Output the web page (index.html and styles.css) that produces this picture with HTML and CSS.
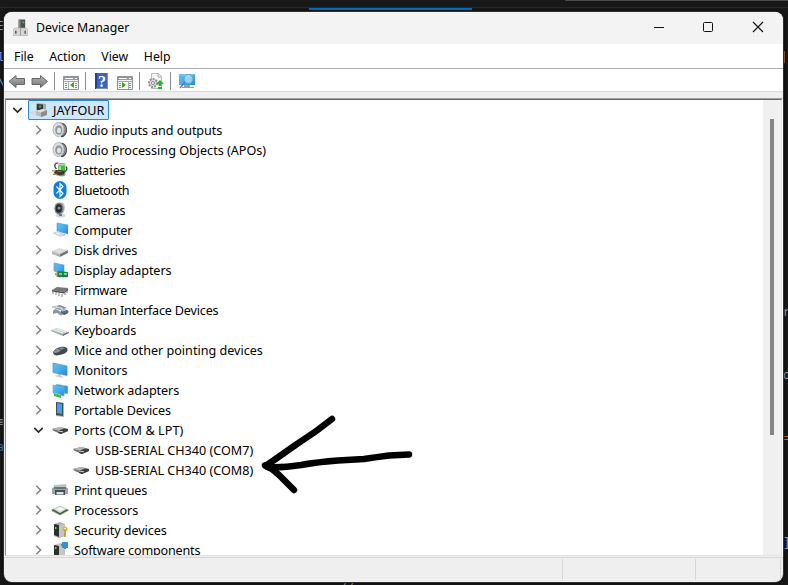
FILE: index.html
```
<!DOCTYPE html>
<html lang="en">
<head>
<meta charset="utf-8">
<title>Device Manager</title>
<link rel="stylesheet" href="styles.css">
</head>
<body>
<svg class="defs" width="0" height="0" aria-hidden="true">
<defs>
<linearGradient id="blue" x1="0" y1="0" x2="1" y2="1"><stop offset="0" stop-color="#5bc4fa"/><stop offset=".5" stop-color="#43aef5"/><stop offset="1" stop-color="#2188dc"/></linearGradient>
<linearGradient id="arrowfill" x1="0" y1="0" x2="0" y2="1"><stop offset="0" stop-color="#b5b5b5"/><stop offset="1" stop-color="#777"/></linearGradient>
<symbol id="closed" viewBox="0 0 16 16"><path d="M6.300 3.800 10.500 8l-4.200 4.200" fill="none" stroke="#858585" stroke-width="1.600"/></symbol>
<symbol id="open" viewBox="0 0 16 16"><path d="M4.300 5.800 8.500 10l4.200-4.200" fill="none" stroke="#2b2b2b" stroke-width="1.700"/></symbol>
<symbol id="pc" viewBox="0 0 16 16"><path d="M5 2 7 1l8 1v9H5z" fill="#a5a5a5"/><path d="m6 2 6 .5V9H6z" fill="#343936"/><path d="M8 3.500h2v2H8z" fill="#35b54a"/><path d="m0 10 5-2 4 1v4l-4 1-5-2z" fill="#d8d8d8"/><path d="m5 9 7-2 4 1v5l-6 2-5-2z" fill="#bcbcbc"/><path d="m5 9 5 1.500L16 8l-4-1z" fill="#dedede"/><path d="m10 10.500 6-2.500v5l-6 2z" fill="#8c8c8c"/></symbol>
<symbol id="speaker" viewBox="0 0 16 16"><path d="M7 1c5-1 8 2 8 7 0 4-3 8-6 7z" fill="#454545"/><path d="M11 2c5 3 4 10-1 12z" fill="#868686"/><ellipse cx="6.500" cy="7.500" rx="5.500" ry="7" fill="#dde1e3" stroke="#adb1b4"/><ellipse cx="6.800" cy="8" rx="3.600" ry="4.800" fill="#929a9e"/><ellipse cx="7" cy="8.500" rx="2" ry="2.800" fill="#e1e5e6"/></symbol>
<symbol id="battery" viewBox="0 0 18 18"><rect x="7" y="1" width="8" height="15" rx="2" fill="#42bd3e"/><path d="M7 3h8M7 14h8" stroke="#c4ccc4" stroke-width="2"/><path d="M9 5v6" stroke="#a9ed91" stroke-width="2"/><path d="M5 8C1 3 4 1 7 1M10 11c5 1 8-2 6-6" fill="none" stroke="#454b43" stroke-width="1.500"/><path d="M4 9h6l4 1v4l-4 1H5l-3-3z" fill="#403b31"/><path d="M0 10h4M1 14h5" stroke="#ac8a4a" stroke-width="1.400"/><path d="M6 10.500h5" stroke="#867b66"/></symbol>
<symbol id="bt" viewBox="0 0 16 18"><rect x="1.500" y="0" width="13" height="18" rx="6.500" fill="#0780ee"/><path d="m4.500 5.500 6.500 7-3 3v-13l3 3-6.500 7" fill="none" stroke="#fff" stroke-width="1.200"/></symbol>
<symbol id="camera" viewBox="0 0 16 16"><ellipse cx="8.500" cy="13.500" rx="5" ry="2" fill="#d7d7d7"/><path d="M9 0c5 0 5 10 1 12z" fill="#c6c6c6"/><ellipse cx="7" cy="6.500" rx="4.600" ry="6" fill="#777c7f"/><ellipse cx="6.800" cy="6.500" rx="3.100" ry="4.300" fill="#24292d"/><circle cx="7" cy="6" r="1.600" fill="#87919a"/><path d="M7 12h3v2H7z" fill="#777"/></symbol>
<symbol id="computer" viewBox="0 0 16 16"><path d="m5 1 11 2v9L5 9z" fill="url(#blue)" stroke="#5b91b5" stroke-width=".6"/><path d="m0 11 5-2 8 3-5 3z" fill="#d9e0e4"/><path d="m2 11 3-1 5 2-3 1z" fill="#f9f9f9" stroke="#adb9c0" stroke-width=".5"/><path d="m8 15 5-3v1l-5 2z" fill="#89959d"/></symbol>
<symbol id="disk" viewBox="0 0 16 16"><path d="m0 9 7-3 9 2-8 4z" fill="#dedede"/><path d="m0 9 8 3v3l-8-3z" fill="#b8b8b8"/><path d="m8 12 8-4v3l-8 4z" fill="#777"/><path d="m5 13 2 .8" stroke="#69c66b"/></symbol>
<symbol id="display" viewBox="0 0 16 16"><path d="m2 1 10 2v9L2 9z" fill="url(#blue)" stroke="#788c98" stroke-width=".6"/><path d="m3 11 3 1v2l-3-1z" fill="#999"/><path d="m5 9 11 1v5H5z" fill="#138554"/><path d="M7 11h3v2H7zm5 0h3v2h-3z" fill="#91ca71"/><path d="M5 8v7m3 0v1m3-1v1m3-1v1" stroke="#c8a43b"/></symbol>
<symbol id="chip" viewBox="0 0 16 16"><path d="m0 8 5-3 11 1-4 4z" fill="#777"/><path d="m0 8 12 2v1.500L0 9.500z" fill="#4b4b4b"/><path d="m12 10 4-4v2.500l-4 3z" fill="#555"/><path d="M1 9v3m3-2v3m3-2v3m3-2v3m3-4v2m2-4v2" stroke="#828282"/></symbol>
<symbol id="hid" viewBox="0 0 18 16"><path d="m0 5 9-2 7 3-7 2z" fill="#7f929e"/><path d="m1 5 10 1m-7-2 8 3" stroke="#d4dce0"/><path d="M2 9c1-2 3-2 5-1l3 2c2 3 1 4-1 3L6 11l-4 1z" fill="#8c989f"/><path d="M10 9c3-3 9-1 7 2-2 2-5 3-7 0z" fill="#566777"/><path d="m11 9 4-1" stroke="#bed0dd"/></symbol>
<symbol id="keyboard" viewBox="0 0 18 16"><path d="m0 8 6-2 12 4-6 3z" fill="#c7cdcf"/><path d="m0 8 12 4v2L0 9z" fill="#9ca5a8"/><path d="m12 12 6-2v1l-6 3z" fill="#667076"/><path d="m3 8 9 3m-6-4 9 3" stroke="#edf1f2"/></symbol>
<symbol id="mouse" viewBox="0 0 16 16"><path d="M1 10C3 6 11 3 15 6c2 4-2 6-8 7-3 1-6 0-6-3z" fill="#414950"/><path d="M2 9c3-4 9-4 12-3-4 0-6 5-11 5-2 0-2-1-1-2z" fill="#8b9399"/><path d="m6 6 4 3 4-2" fill="none" stroke="#3c444c"/></symbol>
<symbol id="monitor" viewBox="0 0 16 16"><path d="m6 11 3 1v2l3 1-3 .7-6-1.700 3-1z" fill="#c5ccd0"/><path d="m1 1 14 3v9.500L1 10.500z" fill="url(#blue)" stroke="#5f8ba9" stroke-width=".7"/></symbol>
<symbol id="network" viewBox="0 0 16 16"><path d="m4 2 12 2v8L4 11z" fill="#319bd6" stroke="#c7d7df" stroke-width=".6"/><path d="m1 3 11 2v9L1 11z" fill="url(#blue)" stroke="#79a9bd" stroke-width=".7"/><path d="m2 11 7 2v3l-7-2z" fill="#36b95a"/><path d="m2 11 7 2" stroke="#88d58e"/></symbol>
<symbol id="phone" viewBox="0 0 16 16"><path d="m4 0 8 1v14l-8-1z" fill="#aab2b8"/><path d="m4 0 7 1v13l-7-1z" fill="#444b52"/><path d="m5 1 5 1v10l-5-1z" fill="#39a4ef"/></symbol>
<symbol id="port" viewBox="0 0 16 16"><path d="m0 7 8-2 8 2v2l-7 3-7-3z" fill="#777"/><path d="m0 7 8-2 5 1-6 2.500z" fill="#b6b6b6"/><path d="m6 9 6-2.500 4 .5v2l-7 3-3-1z" fill="#3e3e3e"/><path d="m6 9 5 .800" stroke="#d0d0d0"/><path d="m1 8 5 1.500" stroke="#777"/></symbol>
<symbol id="printer" viewBox="0 0 16 16"><path d="m2 3 12-1 1 5H1z" fill="#bdc4c7"/><path d="M0 6h16v6H0z" fill="#9ca4a8"/><path d="M2 5h12v2H2z" fill="#69747a"/><path d="M3 8h10v5H3z" fill="#454c52"/><path d="M4.500 10h7v2.500h-7z" fill="#d9e7ed"/><path d="M1 7h3" stroke="#59b470"/></symbol>
<symbol id="cpu" viewBox="0 0 18 16"><path d="m0 8 9-4 9 4-9 5z" fill="#416149"/><path d="m2 7 7-3 7 3-7 4z" fill="#d2dcd3"/><path d="m5 7 4-2 5 2-5 2z" fill="#f6f6f1"/><path d="m1 9 8 4 8-4" fill="none" stroke="#a58c42" stroke-dasharray="1 1"/></symbol>
<symbol id="security" viewBox="0 0 16 16"><path d="m2 2 6-2 5 2v12l-6 2-5-2z" fill="#b2b2b2"/><path d="m2 2 5 1v12l-5-2z" fill="#2d302d"/><path d="M7 3 13 2v11l-6 2z" fill="#c6c6c6"/><path d="M3 5h1.500v2H3z" fill="#61d76d"/><circle cx="13" cy="7" r="2.500" fill="#e7ae3f"/><path d="M13 8v7m-1-3h2" stroke="#d39b36" stroke-width="1.800"/><circle cx="13" cy="6.500" r=".8" fill="#fff"/></symbol>
<symbol id="software" viewBox="0 0 16 16"><path d="m2 3 6-2 5 1v12l-6 2-5-2z" fill="#c6c6c6"/><path d="m2 3 5 1v12l-5-2z" fill="#2d302d"/><path d="M3 5h1.500v2H3z" fill="#61d76d"/><path d="M10 0h2v-1h3v1h2v6h-3v1h-2V6h-2V4H9V2h1z" fill="#3491d5"/></symbol>
</defs>
</svg>
<div class="code" aria-hidden="true"><i class="tab"></i><i class="toprule"></i><i class="tick"></i><b class="c1">E</b><b class="c2">l</b><b class="c3">\</b><b class="c4">≡</b><b class="c5">a</b><b class="c6">r</b><b class="c7">d</b><b class="c8">=</b><b class="c9">]</b><b class="c10">//</b><i class="orange"></i></div>
<main class="window">
<header class="title">
<svg class="appicon" viewBox="0 0 16 18"><path d="M6 0h7v11H6z" fill="#4c504f"/><path d="M6 0h2v11H6z" fill="#858a88"/><path d="M10 2h2v2h-2z" fill="#3cb94b"/><path d="m0 11 2-2h12l2 2v6H0z" fill="#d4d6d9" stroke="#aaa" stroke-width=".6"/><path d="M3 12v3m10-3v3" stroke="#555" stroke-width="1.500"/><path d="M8 9v8" stroke="#999"/></svg>
<h1>Device Manager</h1>
<svg class="controls" viewBox="0 0 112 12" fill="none" stroke="#111"><path d="M0 6.500h10"/><rect x="49.500" y="1.500" width="9" height="9" rx="1"/><path d="m99 1 10 10m0-10L99 11" stroke-width="1.100"/></svg>
</header>
<nav class="menu"><span>File</span><span>Action</span><span>View</span><span>Help</span></nav>
<div class="toolbar">
<svg width="210" height="22" viewBox="0 0 210 22">
<path d="m5 12.500 7-6v3h8.500v6H12v3z" fill="url(#arrowfill)" stroke="#666"/><path d="m43.500 12.500-7-6v3H28v6h8.500v3z" fill="url(#arrowfill)" stroke="#666"/>
<path d="M50.500 3v18M81.500 3v18M135.500 3v18M166.500 3v18" stroke="#8c8c8c"/>
<path d="M59.500 7.500h15v13h-15z" fill="#f4f5f6" stroke="#8c9298"/><path d="M60 8h14v3H60z" fill="#8e9ba6"/><path d="M61 9.500h8m2 0h2" stroke="#fff"/><path d="M64.500 12v8M60 12.500h14" stroke="#a7afb5"/><path d="M61 14.500h2m-2 2h2m-2 2h2m8-4h2m-2 2h2m-2 2h2" stroke="#7d91a0"/><path d="M65 13h6v7h-6z" fill="#fff"/><path d="M70 13v6l-4-3z" fill="#35a61a"/>
<path d="M91 4h13v16H91z" fill="#3e62c4"/><path d="M91 4h2v16h-2z" fill="#253e97"/><path d="M103.500 4v15.500H92" fill="none" stroke="#7590dd"/><text x="94" y="18" class="question">?</text>
<path d="M113.500 7.500h15v13h-15z" fill="#f4f5f6" stroke="#8c9298"/><path d="M114 8h14v3h-14z" fill="#8e9ba6"/><path d="M115 9.500h8m2 0h2" stroke="#fff"/><path d="M124.500 12v8M114 12.500h14" stroke="#a7afb5"/><path d="M115 14.500h2m-2 2h2m-2 2h2m8-4h2m-2 2h2m-2 2h2" stroke="#7d91a0"/><path d="M117 13h7v7h-7z" fill="#fff"/><path d="M118 13v6l4-3z" fill="#35a61a"/>
<path d="M147.500 4.500h7l3 3v12h-10z" fill="#f7f7f7" stroke="#bbb"/><path d="M154 4v4h4" fill="none" stroke="#aaa"/><circle cx="149" cy="14" r="4" fill="#ddd" stroke="#909090" stroke-width="2" stroke-dasharray="2 1"/><circle cx="149" cy="14" r="1.500" fill="#fff" stroke="#888"/><path d="m156 11 4 4h-2.500v2h-3v-2H152zM154 18h4v2h-4z" fill="#18bb2c"/>
<path d="M175 5h16v11h-16z" fill="url(#blue)"/><path d="m175 5 8 4 8-4" fill="#72c9f6"/><path d="M180 16h6v2h4v1h-12v-1h2z" fill="#8b9fad"/><circle cx="184.500" cy="10" r="4.500" fill="#b6e6fb" fill-opacity=".7" stroke="#6d9bb8"/><path d="m181 13-5 6" stroke="#607c90" stroke-width="1.500"/>
</svg>
</div>
<section class="body">
<div class="tree">
<div class="row root"><svg class="chev"><use href="#open"/></svg><div class="selected"><svg class="ico"><use href="#pc"/></svg><span>JAYFOUR</span></div></div>
<div class="row"><svg class="chev"><use href="#closed"/></svg><svg class="ico"><use href="#speaker"/></svg><span class="snug">Audio inputs and outputs</span></div>
<div class="row"><svg class="chev"><use href="#closed"/></svg><svg class="ico"><use href="#speaker"/></svg><span>Audio Processing Objects (APOs)</span></div>
<div class="row"><svg class="chev"><use href="#closed"/></svg><svg class="ico wide"><use href="#battery"/></svg><span class="tight">Batteries</span></div>
<div class="row"><svg class="chev"><use href="#closed"/></svg><svg class="ico tall"><use href="#bt"/></svg><span class="tighter">Bluetooth</span></div>
<div class="row"><svg class="chev"><use href="#closed"/></svg><svg class="ico"><use href="#camera"/></svg><span class="snug">Cameras</span></div>
<div class="row"><svg class="chev"><use href="#closed"/></svg><svg class="ico"><use href="#computer"/></svg><span class="tight">Computer</span></div>
<div class="row"><svg class="chev"><use href="#closed"/></svg><svg class="ico"><use href="#disk"/></svg><span class="snug">Disk drives</span></div>
<div class="row"><svg class="chev"><use href="#closed"/></svg><svg class="ico"><use href="#display"/></svg><span class="snug">Display adapters</span></div>
<div class="row"><svg class="chev"><use href="#closed"/></svg><svg class="ico"><use href="#chip"/></svg><span class="tighter">Firmware</span></div>
<div class="row"><svg class="chev"><use href="#closed"/></svg><svg class="ico wide"><use href="#hid"/></svg><span class="tight">Human Interface Devices</span></div>
<div class="row"><svg class="chev"><use href="#closed"/></svg><svg class="ico wide"><use href="#keyboard"/></svg><span>Keyboards</span></div>
<div class="row"><svg class="chev"><use href="#closed"/></svg><svg class="ico"><use href="#mouse"/></svg><span>Mice and other pointing devices</span></div>
<div class="row"><svg class="chev"><use href="#closed"/></svg><svg class="ico"><use href="#monitor"/></svg><span>Monitors</span></div>
<div class="row"><svg class="chev"><use href="#closed"/></svg><svg class="ico"><use href="#network"/></svg><span class="snug">Network adapters</span></div>
<div class="row"><svg class="chev"><use href="#closed"/></svg><svg class="ico"><use href="#phone"/></svg><span class="snug">Portable Devices</span></div>
<div class="row"><svg class="chev"><use href="#open"/></svg><svg class="ico"><use href="#port"/></svg><span class="loose">Ports (COM &amp; LPT)</span></div>
<div class="row leaf"><svg class="ico"><use href="#port"/></svg><span>USB-SERIAL CH340 (COM7)</span></div>
<div class="row leaf"><svg class="ico"><use href="#port"/></svg><span>USB-SERIAL CH340 (COM8)</span></div>
<div class="row"><svg class="chev"><use href="#closed"/></svg><svg class="ico"><use href="#printer"/></svg><span class="tight">Print queues</span></div>
<div class="row"><svg class="chev"><use href="#closed"/></svg><svg class="ico wide"><use href="#cpu"/></svg><span>Processors</span></div>
<div class="row"><svg class="chev"><use href="#closed"/></svg><svg class="ico"><use href="#security"/></svg><span class="snug">Security devices</span></div>
<div class="row"><svg class="chev"><use href="#closed"/></svg><svg class="ico"><use href="#software"/></svg><span class="tight">Software components</span></div>
</div>
<div class="scroll"><div class="thumb"></div></div>
</section>
<footer class="status"><span></span><span></span><span></span></footer>
</main>
<svg class="ink" viewBox="0 0 170 95" fill="none" stroke="#000" stroke-width="6.500" stroke-linecap="round" stroke-linejoin="round"><path d="M82 14Q66 27 47 39L17 60 15 60.500 22 64 29 70 44 85"/><path d="M18 62Q30 63 51 60 68 57 88 55.500L114 54Q127 52 139 50.500L159 49.500"/></svg>
</body>
</html>
```
FILE: styles.css
```
* { box-sizing: border-box; }
body {
  margin: 0;
  width: 788px;
  height: 585px;
  overflow: hidden;
  position: relative;
  background: #181818;
  color: #000;
  font: 12.6px/20px "Noto Sans", sans-serif;
  padding: 12px 5px 3px 4px;
}
.defs { position: absolute; }
.window {
  position: relative;
  width: 779px;
  height: 570px;
  background: #efefef;
  border-radius: 8px;
  overflow: hidden;
  display: flex;
  flex-direction: column;
  box-shadow: 0 0 0 1px #303030, 0 0 5px #000;
}
.title {
  height: 32px;
  flex: none;
  display: flex;
  align-items: center;
  background: #f3f3f3;
  padding: 0 17px 0 9px;
}
.appicon { width: 15px; height: 18px; }
.title h1 { margin: 0 auto 0 8px; font-size: 12.3px; font-weight: 400; }
.controls { width: 112px; height: 12px; margin-top: -2px; }
.menu {
  height: 25px;
  flex: none;
  display: flex;
  gap: 15.6px;
  padding: 3px 10px 0;
  background: #fff;
  border-bottom: 1px solid #adadad;
  font-size: 12.3px;
}
.toolbar { height: 23px; flex: none; background: #fff; border-bottom: 1px solid #d9d9d9; }
.toolbar svg { display: block; }
.question { fill: #fff; font: bold 16px "Liberation Serif", serif; }
.body {
  margin: 6px 0 0 1px;
  height: 458px;
  flex: none;
  display: flex;
  border-top: 1px solid #a0a0a0;
  border-left: 1px solid #8a8a8a;
  border-right: 1px solid #fff;
  border-bottom: 1px solid #e3e3e3;
  background: #fff;
}
.tree { flex: 1; overflow: hidden; border-top: 1px solid #696969; }
.row { height: 20px; display: flex; align-items: center; gap: 6px; padding-left: 24px; white-space: nowrap; }
.row span { line-height: 18px; padding-top: 2px; }
.row.root { padding-left: 3px; gap: 3px; }
.row.leaf { padding-left: 67px; }
.snug { letter-spacing: -.08px; }
.tight { letter-spacing: -.18px; }
.tighter { letter-spacing: -.35px; }
.loose { letter-spacing: .1px; }
.chev { width: 16px; height: 16px; flex: none; }
.ico { width: 16px; height: 16px; overflow: visible; flex: none; }
.ico.wide { width: 18px; margin: 0 -1px; }
.ico.tall { height: 18px; }
.selected {
  width: 81px;
  height: 20px;
  display: flex;
  align-items: center;
  gap: 6px;
  padding-left: 2px;
  border: 1px solid #2688dc;
  border-radius: 1px;
  background: #cce8ff;
}
.scroll {
  width: 19px;
  flex: none;
  background: #f0f0f0;
  border-top: 1px solid #696969;
  border-right: 1px solid #e3e3e3;
  padding: 19px 0 0 7px;
}
.thumb { width: 4px; height: 316px; background: #858585; }
.status { flex: 1; margin-top: 1px; display: flex; border-top: 1px solid #d7d7d7; padding: 1px 2px 2px 0; }
.status span { width: 81px; border-right: 1px solid #d7d7d7; }
.status span:first-child { width: 559px; }
.status span:nth-child(2) { width: 133px; }
.status span:last-child { flex: 1; }
.ink { position: absolute; left: 250px; top: 405px; width: 170px; height: 95px; }
.code { position: absolute; inset: 0; font-family: "Liberation Mono", monospace; font-size: 12px; line-height: 12px; color: #aaa; }
.code i, .code b { position: absolute; font-weight: 400; }
.tab { left: 309px; top: 8px; width: 163px; height: 2px; background: #0878c8; }
.toprule { left: 565px; top: 0; width: 223px; height: 1px; background: #4b4d4d; }
.tick { left: 0; top: 7px; width: 788px; height: 1px; background: #292929; }
.orange { left: 783px; top: 51px; width: 2px; height: 12px; background: #bd6c2b; }
.c1 { left: -3px; top: 21px; color: #c39b65; }
.c2 { left: -3px; top: 52px; color: #aaa3ef; }
.c3 { left: -2px; top: 78px; color: #91b9cf; }
.c4 { left: -3px; top: 417px; }
.c5 { left: -3px; top: 442px; color: #4382b7; }
.c6 { left: 783px; top: 307px; }
.c7 { left: 783px; top: 370px; }
.c8 { left: 783px; top: 433px; color: #b87950; }
.c9 { left: 783px; top: 537px; color: #9c9ee7; }
.c10 { left: 341px; top: 580px; }
```
